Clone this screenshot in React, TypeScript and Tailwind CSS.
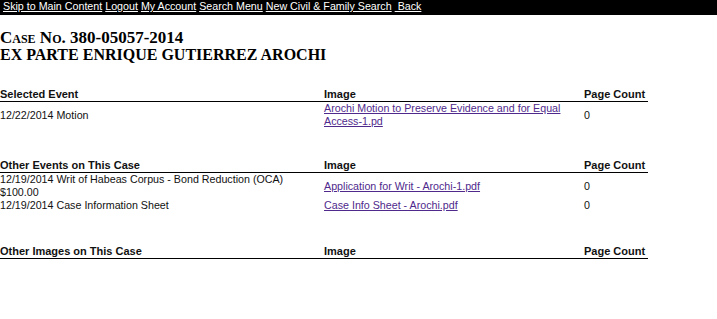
const navLinks = [
  'Skip to Main Content',
  'Logout',
  'My Account',
  'Search Menu',
  'New Civil & Family Search',
  '\u00a0Back',
]

interface EventRow {
  event: string[]
  image: string
  pages: number
}

function EventTable({ title, rows }: { title: string; rows: EventRow[] }) {
  return (
    <table className="w-[648px] table-fixed border-collapse text-[10.7px] leading-[13px]">
      <colgroup>
        <col className="w-[324px]" />
        <col className="w-[260px]" />
        <col className="w-[64px]" />
      </colgroup>
      <thead>
        <tr className="border-b border-black text-left text-[11px] font-bold">
          <th className="p-0">{title}</th>
          <th className="p-0">Image</th>
          <th className="p-0">Page Count</th>
        </tr>
      </thead>
      <tbody>
        {rows.map((r, i) => (
          <tr key={i} className="align-middle">
            <td className="p-0">
              {r.event.map((line, j) => (
                <div key={j}>{line}</div>
              ))}
            </td>
            <td className="p-0">
              <a href="#" className="text-[#4f2a8c] underline">
                {r.image}
              </a>
            </td>
            <td className="p-0">{r.pages}</td>
          </tr>
        ))}
      </tbody>
    </table>
  )
}

export default function App() {
  return (
    <div className="min-h-[319px] bg-white font-['Liberation_Sans',Arial,sans-serif] text-[#111]">
      <div className="flex bg-black px-[3px] pb-[2px] text-[10.7px] leading-[13px] text-white">
        {navLinks.map((l, i) => (
          <span key={l} className="flex">
            {i > 0 && <span className="w-[3px]" />}
            <a href="#" className="whitespace-pre underline">
              {l}
            </a>
          </span>
        ))}
      </div>

      <div className="mt-[14px] font-['Liberation_Serif','Times_New_Roman',serif] leading-[17px] font-bold text-black">
        <div className="text-[17px] [font-variant:small-caps]">Case No. 380-05057-2014</div>
        <div className="text-[16px]">EX PARTE ENRIQUE GUTIERREZ AROCHI</div>
      </div>

      <div className="mt-[25px]">
        <EventTable
          title="Selected Event"
          rows={[
            {
              event: ['12/22/2014 Motion'],
              image: 'Arochi Motion to Preserve Evidence and for Equal Access-1.pd',
              pages: 0,
            },
          ]}
        />
      </div>

      <div className="mt-[31px]">
        <EventTable
          title="Other Events on This Case"
          rows={[
            {
              event: ['12/19/2014 Writ of Habeas Corpus - Bond Reduction (OCA)', '$100.00'],
              image: 'Application for Writ - Arochi-1.pdf',
              pages: 0,
            },
            {
              event: ['12/19/2014 Case Information Sheet'],
              image: 'Case Info Sheet - Arochi.pdf',
              pages: 0,
            },
          ]}
        />
      </div>

      <div className="mt-[33px]">
        <EventTable title="Other Images on This Case" rows={[]} />
      </div>
    </div>
  )
}
